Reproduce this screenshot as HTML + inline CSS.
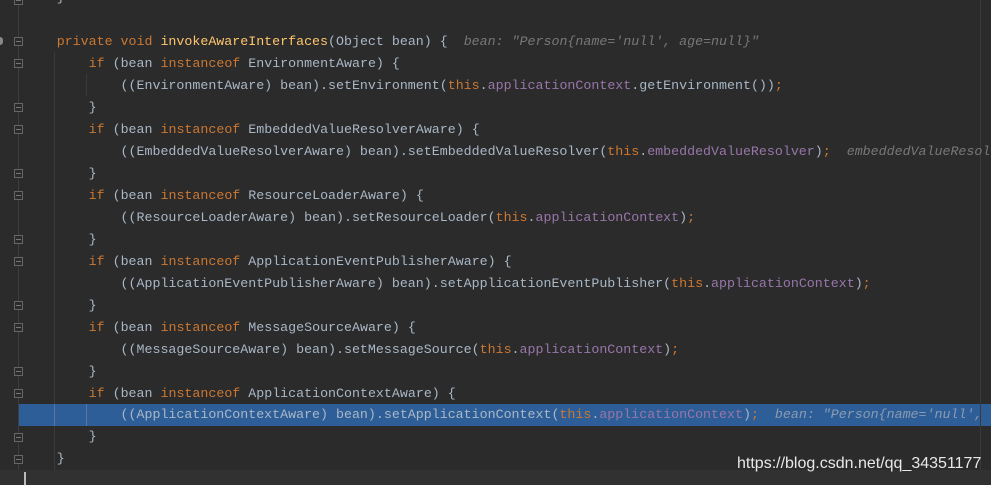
<!DOCTYPE html>
<html><head><meta charset="utf-8"><style>
body{margin:0;width:991px;height:485px;background:#2b2b2b;overflow:hidden;position:relative;font-family:"Liberation Mono",monospace;font-size:13.3px;}
.l{position:absolute;left:24.8px;right:0;overflow:hidden;height:22px;line-height:22px;white-space:pre;color:#a9b7c6;}
.k{color:#cc7832}.m{color:#ffc66d}.f{color:#9876aa}.h{color:#787878;font-style:italic}
.hl{position:absolute;left:19px;right:0;top:404px;height:22px;background:#2e5e97;}
.hl2 .h{color:#8c9bb0}
.bot{position:absolute;left:0;right:0;top:470px;height:15px;background:#313131;}
.g{position:absolute;left:18px;top:0;width:1px;height:470px;background:#3d3d3d;}
.ig{position:absolute;width:1px;background:#3a3a3a;}
.fold{position:absolute;left:14px;width:9px;height:9px;border:1px solid #666;box-sizing:border-box;background:#2b2b2b;}
.fold:after{content:"";position:absolute;left:1px;top:3px;width:5px;height:1px;background:#777;}
.wm{position:absolute;left:737px;top:455px;font-family:"Liberation Sans",sans-serif;font-size:16px;color:#e8e8e8;white-space:nowrap;}
</style></head><body>
<div class="g"></div>
<div class="bot"></div>
<div class="hl"></div>
<div class="ig" style="left:54px;top:52px;height:418px"></div>
<div class="ig" style="left:86px;top:74px;height:22px"></div>
<div class="ig" style="left:86px;top:404px;height:22px;background:#5677a5"></div>
<div class="ig" style="left:54px;top:404px;height:22px;background:#5677a5"></div>
<div style="position:absolute;left:980px;top:0;width:1px;height:470px;background:#3a3a3a"></div>
<div style="position:absolute;left:24px;top:472px;width:2px;height:13px;background:#bbb"></div>
<div style="position:absolute;left:0;top:37px;width:3px;height:8px;border-radius:0 4px 4px 0;background:#888"></div>

<div class="fold" style="top:37px"></div>
<div class="fold" style="top:59px"></div>
<div class="fold" style="top:103px"></div>
<div class="fold" style="top:125px"></div>
<div class="fold" style="top:169px"></div>
<div class="fold" style="top:191px"></div>
<div class="fold" style="top:235px"></div>
<div class="fold" style="top:257px"></div>
<div class="fold" style="top:301px"></div>
<div class="fold" style="top:323px"></div>
<div class="fold" style="top:367px"></div>
<div class="fold" style="top:389px"></div>
<div class="fold" style="top:433px"></div>
<div class="fold" style="top:455px"></div>
<div class="fold" style="top:-4px"></div>

<div class="l" style="top:-13px">    }</div>
<div class="l" style="top:31px">    <span class="k">private void </span><span class="m">invokeAwareInterfaces</span>(Object bean) {  <span class="h">bean: "Person{name='null', age=null}"</span></div>
<div class="l" style="top:53px">        <span class="k">if </span>(bean <span class="k">instanceof </span>EnvironmentAware) {</div>
<div class="l" style="top:75px">            ((EnvironmentAware) bean).setEnvironment(<span class="k">this</span>.<span class="f">applicationContext</span>.getEnvironment())<span class="k">;</span></div>
<div class="l" style="top:97px">        }</div>
<div class="l" style="top:119px">        <span class="k">if </span>(bean <span class="k">instanceof </span>EmbeddedValueResolverAware) {</div>
<div class="l" style="top:141px">            ((EmbeddedValueResolverAware) bean).setEmbeddedValueResolver(<span class="k">this</span>.<span class="f">embeddedValueResolver</span>)<span class="k">;</span>  <span class="h">embeddedValueResolver</span></div>
<div class="l" style="top:163px">        }</div>
<div class="l" style="top:185px">        <span class="k">if </span>(bean <span class="k">instanceof </span>ResourceLoaderAware) {</div>
<div class="l" style="top:207px">            ((ResourceLoaderAware) bean).setResourceLoader(<span class="k">this</span>.<span class="f">applicationContext</span>)<span class="k">;</span></div>
<div class="l" style="top:229px">        }</div>
<div class="l" style="top:251px">        <span class="k">if </span>(bean <span class="k">instanceof </span>ApplicationEventPublisherAware) {</div>
<div class="l" style="top:273px">            ((ApplicationEventPublisherAware) bean).setApplicationEventPublisher(<span class="k">this</span>.<span class="f">applicationContext</span>)<span class="k">;</span></div>
<div class="l" style="top:295px">        }</div>
<div class="l" style="top:317px">        <span class="k">if </span>(bean <span class="k">instanceof </span>MessageSourceAware) {</div>
<div class="l" style="top:339px">            ((MessageSourceAware) bean).setMessageSource(<span class="k">this</span>.<span class="f">applicationContext</span>)<span class="k">;</span></div>
<div class="l" style="top:361px">        }</div>
<div class="l" style="top:383px">        <span class="k">if </span>(bean <span class="k">instanceof </span>ApplicationContextAware) {</div>
<div class="l hl2" style="top:404px">            ((ApplicationContextAware) bean).setApplicationContext(<span class="k">this</span>.<span class="f">applicationContext</span>)<span class="k">;</span>  <span class="h">bean: "Person{name='null', age=null}"</span></div>
<div class="l" style="top:426px">        }</div>
<div class="l" style="top:448px">    }</div>
<div class="wm">https://blog.csdn.net/qq_34351177</div>
</body></html>
